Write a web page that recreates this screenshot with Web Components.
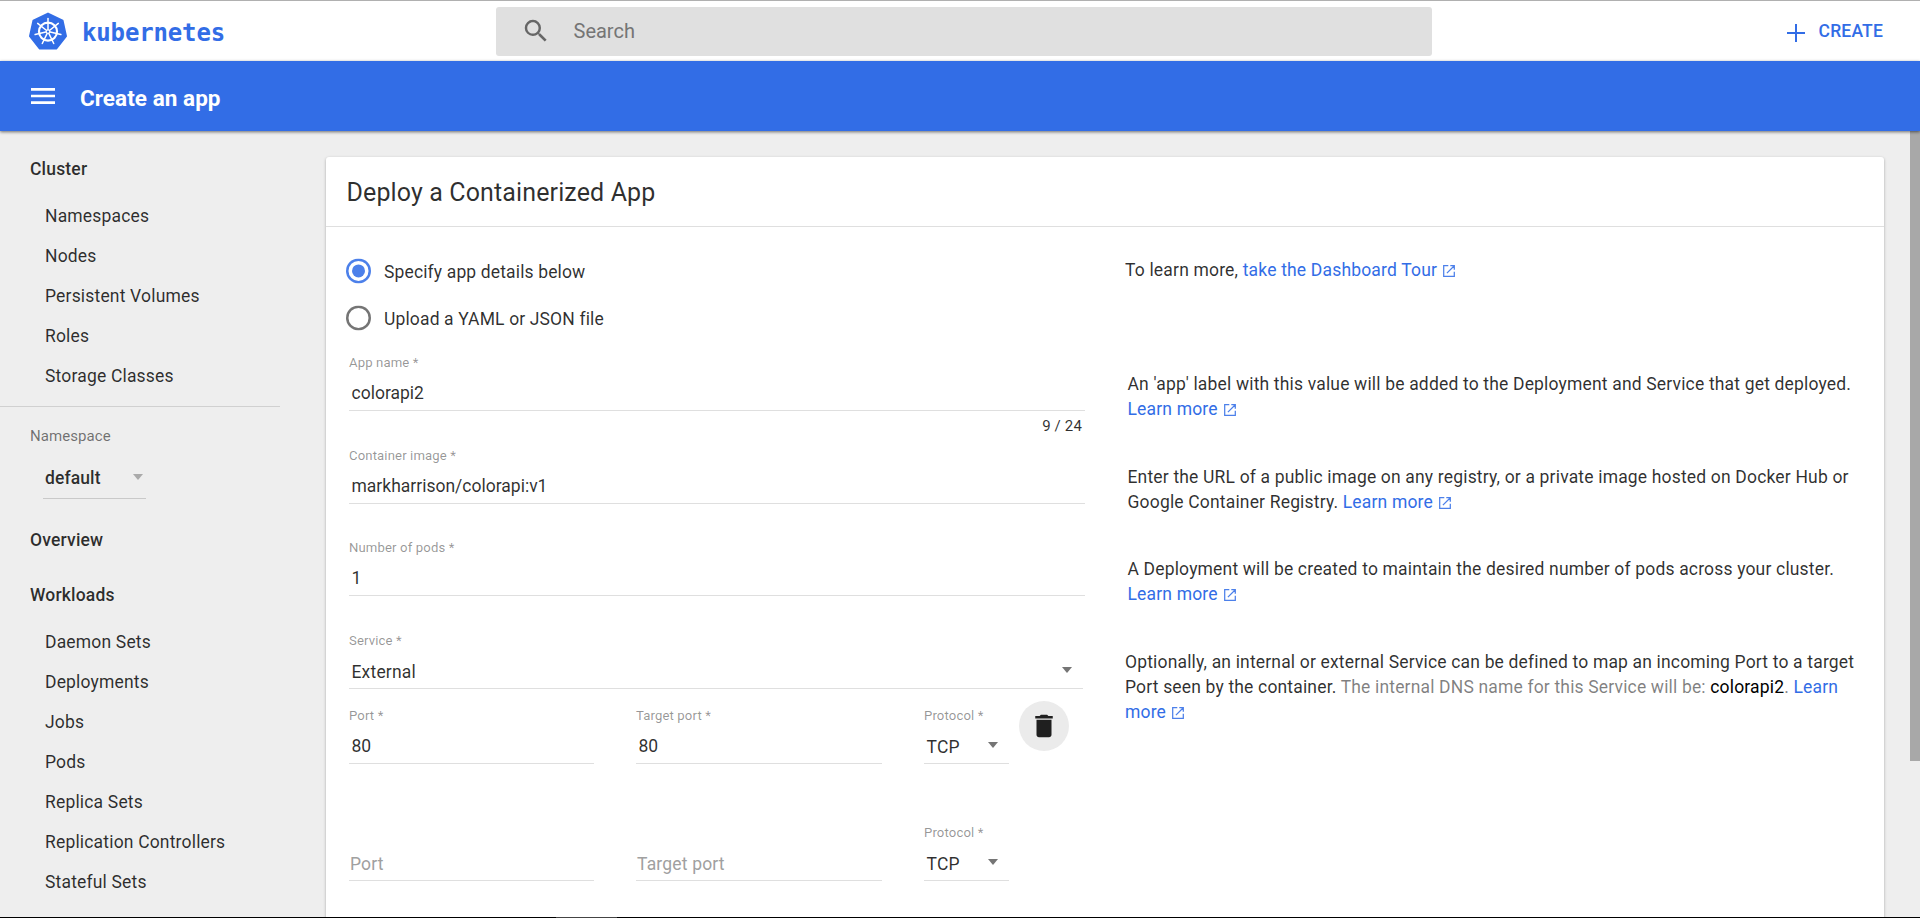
<!DOCTYPE html>
<html lang="en">
<head>
<meta charset="utf-8">
<title>Kubernetes Dashboard</title>
<style>
  html, body { margin: 0; height: 100%; overflow: hidden; }
  body { font: 400 17.5px/25px Roboto, "Noto Sans", sans-serif; letter-spacing: 0.175px; color: rgba(0,0,0,.82); background: #eee; }
</style>
</head>
<body>
<k-app></k-app>
<script>
const define = (name, html) => customElements.define(name, class extends HTMLElement {
  constructor() {
    super();
    const t = document.createElement('template');
    t.innerHTML = html;
    this.attachShadow({ mode: 'open' }).append(t.content.cloneNode(true));
  }
});

const spokes = Array.from({ length: 7 }, (_, i) => `<g transform="rotate(${i * 360 / 7})"><path d="M0-2.2V-13.2" stroke-width="1.5"/></g>`).join('');

define('k-logo', `
<style>
  :host { display: flex; align-items: center; color: #326de6; }
  svg { display: block; width: 38px; height: 39px; }
  span { margin-left: 15px; padding-top: 3px; font: 700 24px/30px "DejaVu Sans Mono", monospace; letter-spacing: -.15px; }
</style>
<svg viewBox="-19 -19.6 38 39">
  <path d="M0-18L14.6-11L18 4.6L8.2 17H-8.2L-18 4.6L-14.6-11Z" fill="#326de6" stroke="#326de6" stroke-width="2" stroke-linejoin="round"/>
  <g fill="none" stroke="#fff" stroke-linecap="round"><circle r="9" stroke-width="2.2"/><circle r="1.8" stroke-width="1.2"/>${spokes}</g>
</svg><span>kubernetes</span>`);

define('k-search', `
<style>
  :host { display: flex; align-items: center; box-sizing: border-box; width: 936px; height: 49px; padding-left: 25px; background: #e0e0e0; border-radius: 3px; color: #757575; font-size: 20px; letter-spacing: 0; }
  svg { width: 30px; height: 30px; fill: #666; margin-right: 22.5px; margin-bottom: 1px; }
  span { padding-bottom: 1px; }
</style>
<svg viewBox="0 0 24 24"><path d="M15.5 14h-.79l-.28-.27A6.47 6.47 0 0 0 16 9.500 6.500 6.500 0 1 0 9.500 16c1.610 0 3.090-.59 4.230-1.570l.27.28v.79l5 4.990L20.490 19l-4.990-5zm-6 0C7.010 14 5 11.990 5 9.500S7.010 5 9.500 5 14 7.010 14 9.500 11.990 14 9.500 14z"/></svg><span>Search</span>`);

define('k-topbar', `
<style>
  :host { display: grid; grid-template-columns: 496px 936px 1fr; box-sizing: border-box; height: 61px; border-top: 1px solid #b0b0b0; background: #fff; }
  k-logo { padding-left: 29px; }
  k-search { margin-top: 6px; }
  .create { display: flex; align-items: center; justify-content: flex-end; padding: 1px 37px 0 0; color: #326de6; font-weight: 500; letter-spacing: .175px; }
  svg { width: 18px; height: 18px; margin-right: 13.5px; margin-top: 3px; }
</style>
<k-logo></k-logo><k-search></k-search>
<div class="create"><svg viewBox="0 0 18 18"><path d="M9 0V18M0 9H18" stroke="#326de6" stroke-width="2"/></svg><span>CREATE</span></div>`);

define('k-actionbar', `
<style>
  :host { display: flex; align-items: center; box-sizing: border-box; height: 70px; padding-left: 30.5px; background: #326de6; color: #fff; font-size: 22.5px; font-weight: 700; letter-spacing: .05px; box-shadow: 0 1px 3px rgba(0,0,0,.55); position: relative; z-index: 1; }
  svg { width: 24px; height: 16px; margin-right: 25.5px; }
  span { padding-top: 4px; }
</style>
<svg viewBox="0 0 24 16"><path d="M0 0H24V2.700H0ZM0 6.650H24V9.350H0ZM0 13.300H24V16H0Z" fill="#fff"/></svg><span><slot></slot></span>`);

define('k-nav-item', `
<style>
  :host { display: block; height: 40px; line-height: 40px; padding-left: 45px; }
  :host([head]) { height: 55px; line-height: 55px; padding-left: 30px; font-weight: 500; }
  :host([head="group"]) { height: 54px; }
</style><slot></slot>`);

define('k-sidebar', `
<style>
  :host { display: block; width: 280px; padding-top: 11px; }
  .ns { border-top: 1px solid #d0d0d0; margin-top: 10px; padding: 19px 0 0 30px; font-size: 15px; letter-spacing: .08px; line-height: 20px; color: rgba(0,0,0,.54); }
  .sel { display: flex; justify-content: space-between; align-items: center; box-sizing: border-box; width: 103px; height: 40px; margin: 13px 0 14px 43px; padding: 0 3px 0 2px; border-bottom: 1px solid #c9c9c9; font-weight: 500; letter-spacing: .1px; }
  .sel i { border: 5px solid transparent; border-top: 6px solid #aaa; border-bottom: 0; margin-bottom: 4px; }
</style>
<k-nav-item head="group">Cluster</k-nav-item>
<k-nav-item>Namespaces</k-nav-item><k-nav-item>Nodes</k-nav-item><k-nav-item>Persistent Volumes</k-nav-item><k-nav-item>Roles</k-nav-item><k-nav-item>Storage Classes</k-nav-item>
<div class="ns">Namespace</div>
<div class="sel"><span>default</span><i></i></div>
<k-nav-item head>Overview</k-nav-item>
<k-nav-item head="group">Workloads</k-nav-item>
<k-nav-item>Daemon Sets</k-nav-item><k-nav-item>Deployments</k-nav-item><k-nav-item>Jobs</k-nav-item><k-nav-item>Pods</k-nav-item><k-nav-item>Replica Sets</k-nav-item><k-nav-item>Replication Controllers</k-nav-item><k-nav-item>Stateful Sets</k-nav-item>`);

define('k-radio', `
<style>
  :host { display: flex; align-items: center; height: 25px; letter-spacing: .14px; }
  i { box-sizing: border-box; width: 25px; height: 25px; box-shadow: inset 0 0 0 2.5px #757575; border-radius: 50%; margin-right: 13px; display: grid; place-items: center; transform: translateY(-.6px); }
  :host([checked]) i { box-shadow: inset 0 0 0 2.5px #4c80ea; }
  :host([checked]) i::after { content: ""; width: 13px; height: 13px; border-radius: 50%; background: #4c80ea; }
  span { padding-top: 2px; }
</style><i></i><span><slot></slot></span>`);

define('k-field', `
<style>
  :host { display: flex; flex-direction: column; box-sizing: border-box; height: 55px; border-bottom: 1px solid #dfdfdf; }
  .label { height: 16px; white-space: nowrap; color: rgba(0,0,0,.42); }
  .label span { display: inline-block; line-height: 21.33px; transform: translateY(-3px) scale(.75); transform-origin: 0 0; }
  .value { display: flex; justify-content: space-between; align-items: center; margin-top: 9px; padding-left: 2.5px; letter-spacing: 0; }
  i { display: none; border: 5px solid transparent; border-top: 6px solid #757575; border-bottom: 0; margin: 0 11px 5px 0; }
  :host([select]) i { display: block; }
  :host([select]) .value { margin-top: 10px; height: 25px; letter-spacing: .175px; }
  :host([empty]) .value { margin-top: 10px; padding-left: 1px; color: #a0a0a0; letter-spacing: .175px; }
</style>
<div class="label"><span><slot name="label"></slot></span></div><div class="value"><slot></slot><i></i></div>`);

define('k-link', `
<style>
  :host { color: #326de6; }
  svg { width: 12px; height: 12px; margin-left: 6px; vertical-align: -1px; }
</style><slot></slot><svg viewBox="0 0 12 12" fill="none" stroke="#4c80ea" stroke-width="1.25"><path d="M5.300.7H.7V11.300H11.300V6.700M7.300.7H11.300V4.700M11.300.7L3.900 8.100"/></svg>`);

define('k-trash', `
<style>
  :host { display: grid; place-items: center; width: 50px; height: 50px; border-radius: 50%; background: #ebebeb; }
  svg { width: 30px; height: 30px; fill: #1f1f1f; }
</style><svg viewBox="0 0 24 24"><path d="M6 19c0 1.100.9 2 2 2h8c1.100 0 2-.9 2-2V7H6v12zM19 4h-3.500l-1-1h-5l-1 1H5v2h14V4z"/></svg>`);

define('k-row', `
<style>
  :host { display: grid; grid-template-columns: 736px 1fr; column-gap: 42.5px; padding-left: 23px; }
  .help { padding-top: 16px; width: 740px; letter-spacing: .17px; }
</style><div><slot></slot></div><div class="help"><slot name="help"></slot></div>`);

define('k-card', `
<style>
  :host { display: block; background: #fff; border-radius: 3px 3px 0 0; box-shadow: 0 1px 3px rgba(0,0,0,.3); padding-bottom: 60px; }
  header { box-sizing: border-box; height: 70px; padding: 21px 0 0 20.5px; border-bottom: 1px solid #dfdfdf; font-size: 25px; line-height: 30px; letter-spacing: .125px; }
</style><header><slot name="title"></slot></header><slot></slot>`);

define('k-form', `
<style>
  :host { display: block; }
  .intro { display: grid; grid-template-columns: 779px 1fr; height: 129px; box-sizing: border-box; padding: 31px 0 0 20px; }
  k-radio + k-radio { margin-top: 22px; }
  .intro k-radio:first-child { margin-top: 1px; }
  .counter { height: 38px; box-sizing: border-box; padding: 5px 3px 0 0; text-align: right; font-size: 15px; letter-spacing: .15px; line-height: 20px; }
  .svc { margin-right: 2px; }
  .ports { display: grid; grid-template-columns: 245px 246px 85px 50px; column-gap: 42px; margin-top: 20px; }
  .ports.b { margin-top: 62px; }
  k-trash { margin: -8px 0 -2px -32px; height: 50px; }
  .dns { color: rgba(0,0,0,.5); } .dns b { font-weight: 400; color: #000; }
  .up { margin-left: -2.5px; display: block; letter-spacing: .165px; }
  .fixed { height: 55px; }
  k-row.pods { margin-top: 37px; }
  k-row.service { margin-top: 38px; }
</style>
<k-card>
  <span slot="title">Deploy a Containerized App</span>
  <div class="intro">
    <div><k-radio checked>Specify app details below</k-radio><k-radio>Upload a YAML or JSON file</k-radio></div>
    <div>To learn more, <k-link>take the Dashboard Tour</k-link></div>
  </div>
  <k-row><k-field><span slot="label">App name *</span>colorapi2</k-field><div class="counter">9 / 24</div>
    <span slot="help">An 'app' label with this value will be added to the Deployment and Service that get deployed. <k-link>Learn more</k-link></span></k-row>
  <k-row class="fixed"><k-field><span slot="label">Container image *</span>markharrison/colorapi:v1</k-field>
    <span slot="help">Enter the URL of a public image on any registry, or a private image hosted on Docker Hub or<br>Google Container Registry. <k-link>Learn more</k-link></span></k-row>
  <k-row class="pods fixed"><k-field><span slot="label">Number of pods *</span>1</k-field>
    <span slot="help">A Deployment will be created to maintain the desired number of pods across your cluster.<br><k-link>Learn more</k-link></span></k-row>
  <k-row class="service"><k-field class="svc" select><span slot="label">Service *</span>External</k-field>
    <div class="ports"><k-field><span slot="label">Port *</span>80</k-field><k-field><span slot="label">Target port *</span>80</k-field><k-field select><span slot="label">Protocol *</span>TCP</k-field><k-trash></k-trash></div>
    <div class="ports b"><k-field empty>Port</k-field><k-field empty>Target port</k-field><k-field select><span slot="label">Protocol *</span>TCP</k-field></div>
    <span slot="help" class="up">Optionally, an internal or external Service can be defined to map an incoming Port to a target<br>Port seen by the container. <span class="dns">The internal DNS name for this Service will be: <b>colorapi2</b>.</span> <k-link>Learn<br>more</k-link></span></k-row>
</k-card>`);

define('k-scrollbar', `
<style>:host { display: block; width: 10px; } div { height: 630px; background: #a8a8a8; }</style><div></div>`);

define('k-app', `
<style>
  :host { display: flex; flex-direction: column; height: 918px; overflow: hidden; background: #eee; }
  k-topbar, k-actionbar, footer { flex: none; }
  main { flex: 1; min-height: 0; overflow: hidden; display: grid; grid-template-columns: 326px 1558px 1fr 10px; }
  k-form { padding-top: 26px; }
  k-form, k-sidebar { min-height: 0; }
  k-scrollbar { grid-column: 4; }
  footer { height: 1px; background: linear-gradient(90deg, #000 556px, #444 556px 617px, #000 617px); }
</style>
<k-topbar></k-topbar>
<k-actionbar>Create an app</k-actionbar>
<main><k-sidebar></k-sidebar><k-form></k-form><k-scrollbar></k-scrollbar></main>
<footer></footer>`);
</script>
</body>
</html>
